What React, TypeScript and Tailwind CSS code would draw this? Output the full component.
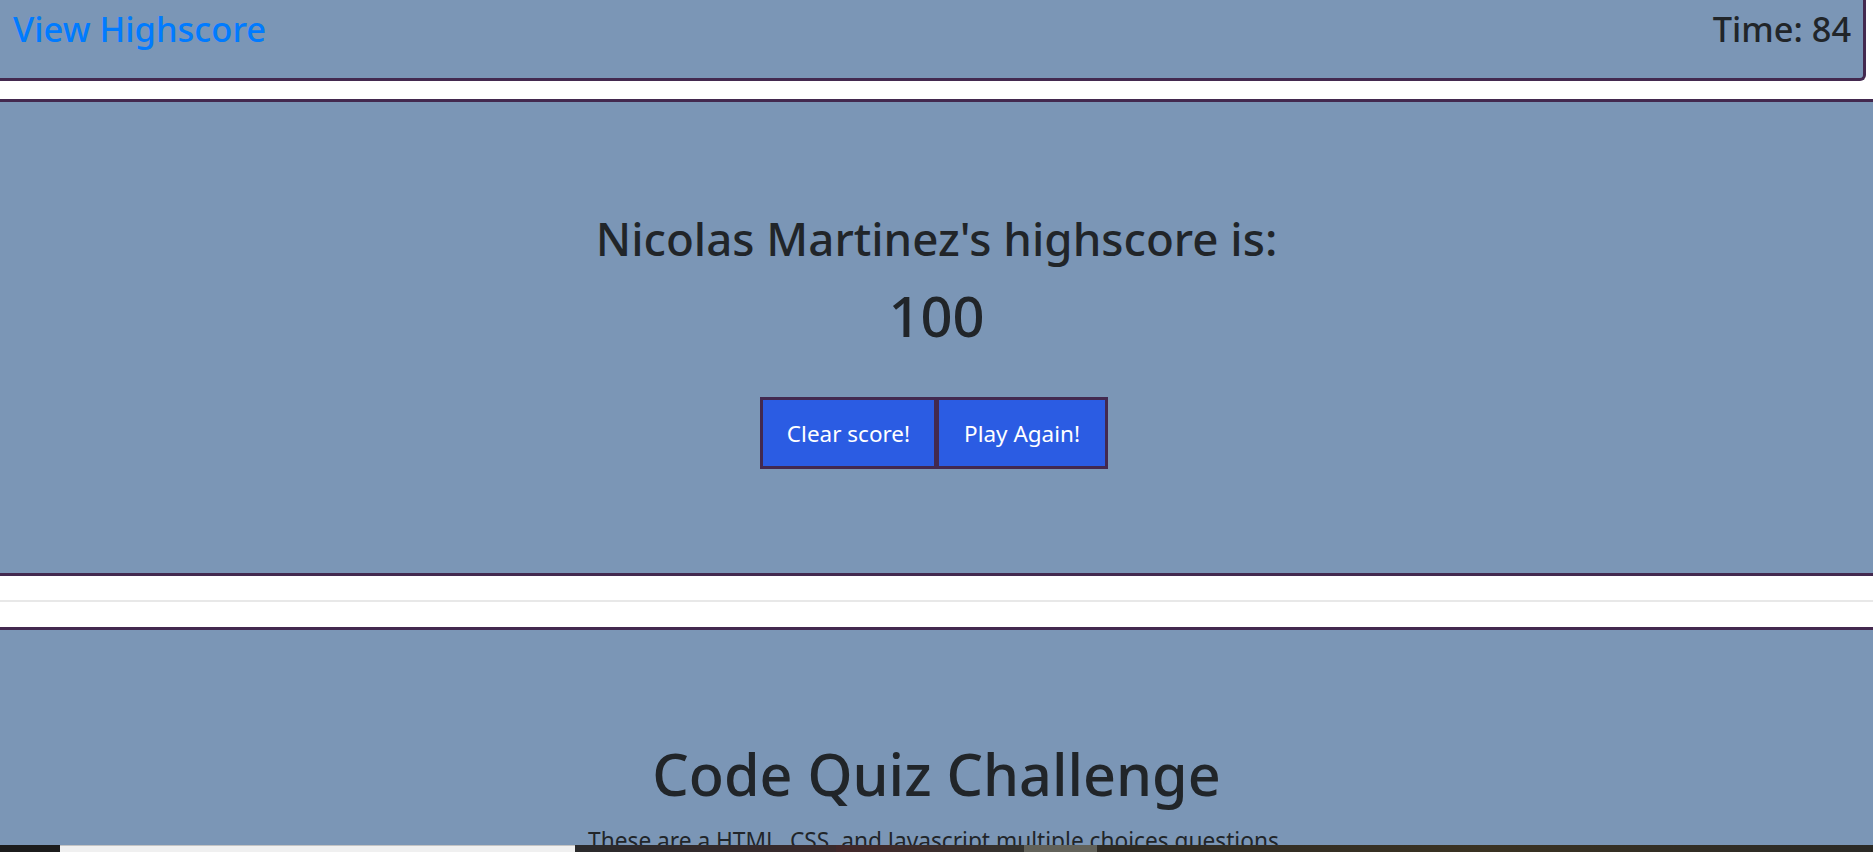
import React from 'react';

const font = { fontFamily: '"Noto Sans", "Open Sans", sans-serif' };

const Header: React.FC = () => (
  <div className="mr-[7px] flex h-[81px] items-start justify-between rounded-br-[6px] border-r-[3px] border-b-[3px] border-[#43294f] bg-[#7b96b6] pt-[8px] pr-[12px] pl-[13px]">
    <a href="#" className="text-[34.5px] leading-[1.2] font-medium text-[#007bff]">View Highscore</a>
    <span className="text-[34.3px] leading-[1.2] font-medium text-[#212529]">Time: 84</span>
  </div>
);

const ScoreCard: React.FC = () => (
  <section className="mt-[18px] flex flex-col items-center border-y-[3px] border-[#43294f] bg-[#7b96b6] pt-[109px] pb-[104px] text-[#212529]">
    <h2 className="text-[45.7px] leading-[1.2] font-medium">Nicolas Martinez's highscore is:</h2>
    <p className="mt-[16px] text-[56px] leading-[1.2] font-medium">100</p>
    <div className="mt-[48px] mr-[5px] flex">
      <button className="h-[72px] w-[177px] border-[3px] border-[#43294f] bg-[#2b5ce3] pt-[2px] text-[22.5px] text-white">Clear score!</button>
      <button className="-ml-px h-[72px] w-[172px] border-[3px] border-[#43294f] bg-[#2b5ce3] pt-[2px] text-[22.5px] text-white">Play Again!</button>
    </div>
  </section>
);

const Intro: React.FC = () => (
  <section className="flex flex-col items-center border-t-[3px] border-[#43294f] bg-[#7b96b6] pt-[110px] pb-[60px] text-[#212529]">
    <h1 className="text-[57.5px] leading-[1.2] font-medium">Code Quiz Challenge</h1>
    <p className="mt-[18px] text-[22.7px] leading-[1.2]">These are a HTML, CSS, and Javascript multiple choices questions.</p>
  </section>
);

const Taskbar: React.FC = () => (
  <div className="fixed bottom-0 left-0 flex h-[7px] w-full">
    <div className="w-[60px] bg-[#1c1c1c]" />
    <div className="w-[515px] border-t border-[#c4c4c4] bg-[#f0f0f0]" />
    <div className="w-[261px] bg-gradient-to-r from-[#2a2a2c] to-[#3a2a2c]" />
    <div className="w-[188px] bg-gradient-to-r from-[#43282a] to-[#33332f]" />
    <div className="w-[73px] bg-[#62625a]" />
    <div className="flex-1 bg-gradient-to-r from-[#2e2b25] via-[#3a3222] to-[#2b2a26]" />
  </div>
);

export default function App() {
  return (
    <div className="relative h-[852px] overflow-hidden bg-white" style={font}>
      <Header />
      <ScoreCard />
      <div className="h-[51px] pt-[24px]">
        <hr className="border-t-2 border-[#e8e8e8]" />
      </div>
      <Intro />
      <Taskbar />
    </div>
  );
}
